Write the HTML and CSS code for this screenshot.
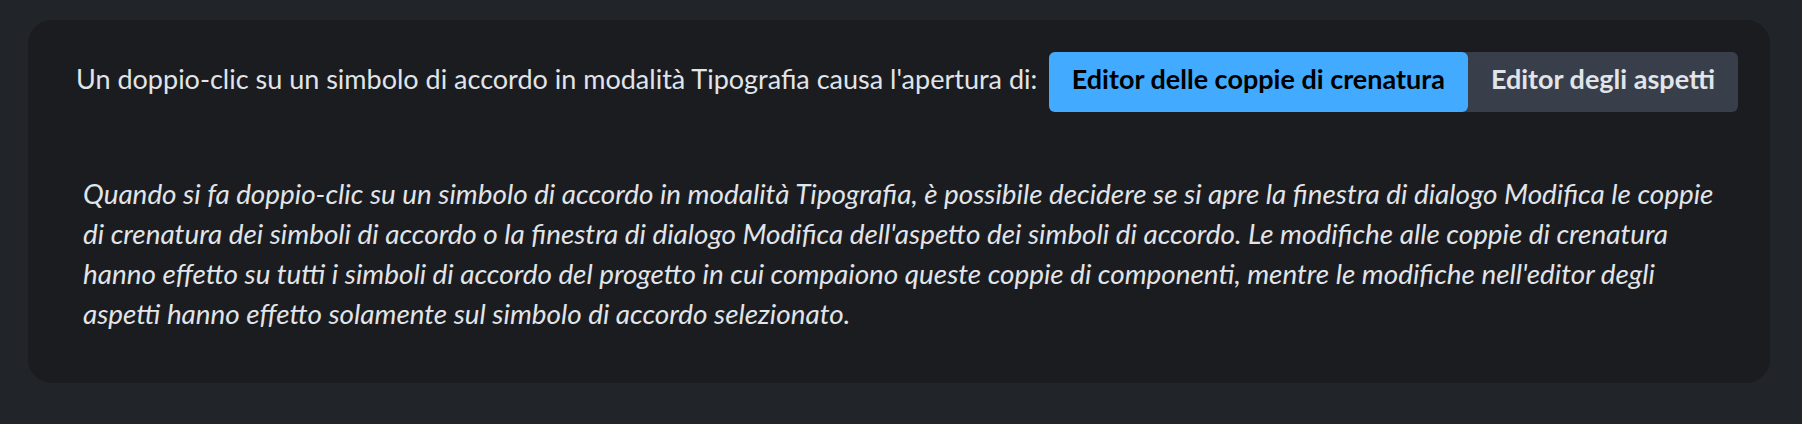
FILE: index.html
```html
<!DOCTYPE html>
<html lang="it">
<head>
<meta charset="utf-8">
<title>Preferenze</title>
<link rel="stylesheet" href="styles.css">
</head>
<body>
<section class="card">
  <div class="row">
    <span class="label">Un doppio-clic su un simbolo di accordo in modalità Tipografia causa l'apertura di:</span>
    <div class="segmented">
      <button class="seg seg-active">Editor delle coppie di crenatura</button>
      <button class="seg">Editor degli aspetti</button>
    </div>
  </div>
  <p class="desc">Quando si fa doppio-clic su un simbolo di accordo in modalità Tipografia, è possibile decidere se si apre la finestra di dialogo Modifica le coppie<br>di crenatura dei simboli di accordo o la finestra di dialogo Modifica dell'aspetto dei simboli di accordo. Le modifiche alle coppie di crenatura<br>hanno effetto su tutti i simboli di accordo del progetto in cui compaiono queste coppie di componenti, mentre le modifiche nell'editor degli<br>aspetti hanno effetto solamente sul simbolo di accordo selezionato.</p>
</section>
</body>
</html>
```
FILE: styles.css
```css
html, body {
  margin: 0;
  padding: 0;
}
body {
  background: #212428;
  font-family: Lato, "Noto Sans", sans-serif;
  color: #e1e4e8;
  padding: 20px 32px 0 28px;
  height: 424px;
  box-sizing: border-box;
}
.card {
  background: #1a1c20;
  border-radius: 24px;
  padding: 32px 32px 0 48px;
  height: 363px;
  box-sizing: border-box;
}
.row {
  display: flex;
  align-items: center;
  gap: 8px;
}
.label {
  font-size: 27px;
  line-height: 32px;
  padding-bottom: 6px;
  white-space: nowrap;
}
.segmented {
  display: flex;
  flex-shrink: 0;
  background: #383f4a;
  border-radius: 6px;
  margin-left: auto;
}
.seg {
  box-sizing: border-box;
  font-family: inherit;
  font-size: 27px;
  font-weight: 700;
  line-height: 32px;
  height: 60px;
  padding: 0 23px 6px;
  border: none;
  border-radius: 6px;
  background: transparent;
  color: #e1e4e8;
  white-space: nowrap;
}
.seg-active {
  background: #42abff;
  color: #000;
}
.desc {
  margin: 62px 0 0 7px;
  font-style: italic;
  font-size: 27.85px;
  line-height: 40px;
  white-space: nowrap;
}
```
